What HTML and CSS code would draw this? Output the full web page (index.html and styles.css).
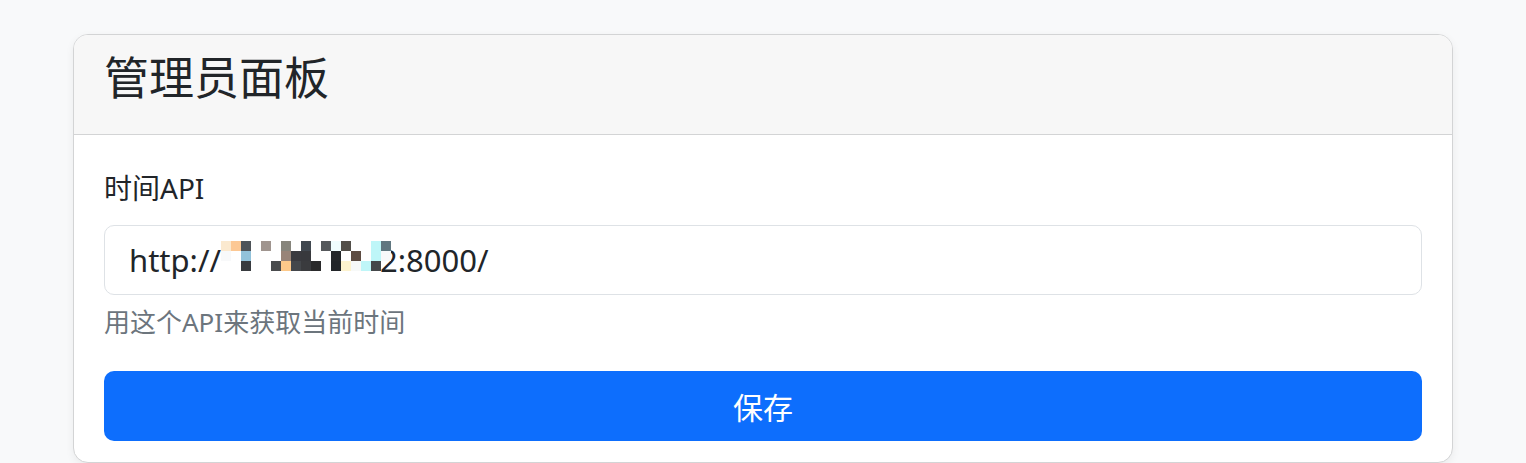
FILE: index.html
```html
<!DOCTYPE html>
<html lang="zh-CN">
<head>
<meta charset="utf-8">
<title>管理员面板</title>
<link rel="stylesheet" href="styles.css">
</head>
<body>
<div class="page">
  <div class="card">
    <div class="card-header">
      <h2 class="title">管理员面板</h2>
    </div>
    <form class="card-body">
      <label class="form-label" for="api">时间API</label>
      <div class="form-control" id="api">
        <span>http://</span><span class="mosaic"><i style="background:#fbe9cf"></i><i style="background:#fcc894"></i><i style="background:#4e5358"></i><i></i><i style="background:#a0958f"></i><i></i><i style="background:#87857c"></i><i></i><i style="background:#414850"></i><i></i><i style="background:#56595c"></i><i style="background:#effcfd"></i><i style="background:#524f49"></i><i></i><i></i><i style="background:#bef6f8"></i><i style="background:#607780"></i><i style="background:#f8f9fa"></i><i></i><i style="background:#92c2da"></i><i></i><i></i><i></i><i style="background:#988478"></i><i style="background:#3a3a3f"></i><i style="background:#38393d"></i><i></i><i></i><i style="background:#24272a"></i><i></i><i style="background:#5d4c42"></i><i></i><i style="background:#bef6f8"></i><i style="background:#f8f9fa"></i><i></i><i></i><i style="background:#383b3f"></i><i></i><i></i><i style="background:#4a4c4e"></i><i style="background:#fdc98a"></i><i style="background:#44474b"></i><i style="background:#3a3b3e"></i><i style="background:#2a2a2b"></i><i></i><i style="background:#222529"></i><i style="background:#fdf3cf"></i><i style="background:#f7f9f8"></i><i style="background:#bff6f8"></i><i style="background:#45484a"></i></span><span class="tail">2:8000/</span>
      </div>
      <div class="form-text">用这个API来获取当前时间</div>
      <button type="button" class="btn">保存</button>
    </form>
  </div>
</div>
</body>
</html>
```
FILE: styles.css
```css
* { box-sizing: border-box; }
html, body { margin: 0; padding: 0; }
body {
  background: #f8f9fa;
  color: #212529;
  font-family: "Noto Sans", "Noto Sans CJK SC", sans-serif;
}
.page {
  padding: 34px 73px 0;
  height: 463px;
  overflow: hidden;
}
.card {
  background: #fff;
  border: 1px solid #d3d4d5;
  border-radius: 15px;
  box-shadow: 0 3px 8px rgba(0, 0, 0, 0.06);
}
.card-header {
  background: #f7f7f7;
  border-bottom: 1px solid #d3d4d5;
  border-radius: 14px 14px 0 0;
  padding: 15px 30px 28px;
}
.title {
  margin: 0;
  font-weight: 400;
  font-size: 45px;
  line-height: 56px;
  color: #212529;
}
.card-body {
  display: flex;
  flex-direction: column;
  padding: 32px 30px 21px;
}
.form-label {
  font-size: 28px;
  line-height: 42px;
  margin-bottom: 16px;
}
.form-control {
  height: 70px;
  border: 1px solid #dee2e6;
  border-radius: 10px;
  padding: 0 24px;
  display: flex;
  align-items: center;
  font-size: 31px;
  color: #212529;
}
.mosaic {
  display: inline-grid;
  grid-template-columns: repeat(17, 10px);
  grid-auto-rows: 10px;
  margin-top: -8px;
  margin-right: -11px;
  position: relative;
  z-index: 1;
}
.mosaic i {
  display: block;
  background: #fff;
}
.form-text {
  margin-top: 8px;
  font-size: 26px;
  line-height: 39px;
  color: #6c757d;
}
.btn {
  margin-top: 29px;
  height: 70px;
  border: 0;
  border-radius: 10px;
  background: #0d6efd;
  color: #fff;
  font-family: inherit;
  font-size: 30px;
  cursor: pointer;
}
```
